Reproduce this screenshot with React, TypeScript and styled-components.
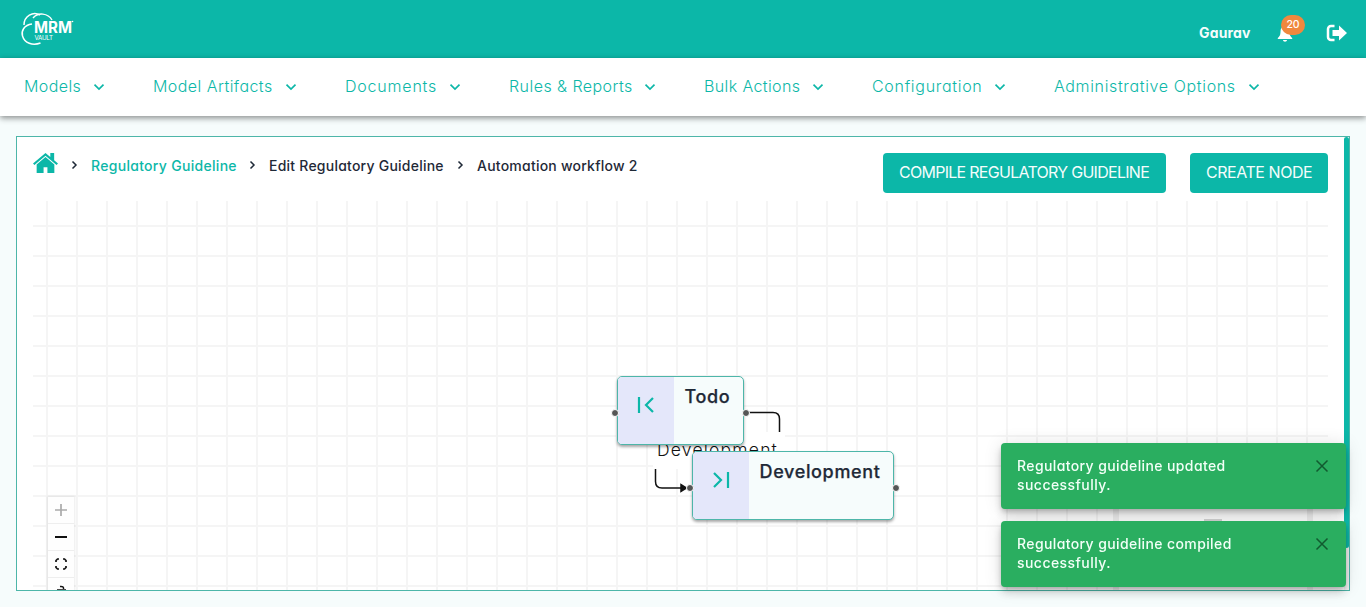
import React from 'react';
import styled, { createGlobalStyle } from 'styled-components';

const TEAL = '#0cb7a8';

const Global = createGlobalStyle`
  * { box-sizing: border-box; }
  html, body { margin: 0; height: 100%; overflow: hidden; }
  body { background: #f6fcfc; font-family: Inter, "Open Sans", sans-serif; font-feature-settings: "cv11", "ss03"; color: #1f2937; }
`;
const Page = styled.div`height: 607px; display: flex; flex-direction: column;`;
const TopBar = styled.header`
  height: 58px; flex: none; background: ${TEAL}; display: flex; align-items: center;
  padding: 0 18px 0 20px; color: #f4fdfc;
`;
const Account = styled.div`margin-left: auto; display: flex; align-items: center; padding-top: 8px;`;
const Text = styled.span<{ $w: number; $ls?: number }>`
  display: inline-block; width: ${p => p.$w}px; letter-spacing: ${p => p.$ls ?? 0}px; white-space: nowrap;
`;
const UserName = styled(Text)`font-size: 14px; font-weight: 700; padding-bottom: 2px;`;
const Bell = styled.div`position: relative; width: 16px; height: 17px; margin: 1px 33px 0 26px; display: flex;`;
const Badge = styled.span`
  position: absolute; left: 4px; top: -10px; width: 24px; height: 20px; border-radius: 10px;
  background: #f0883e; color: #fff; font-size: 10.5px; font-weight: 500; line-height: 19px; text-align: center;
`;
const Nav = styled.nav`
  height: 58px; flex: none; background: #fff; display: flex; align-items: center; gap: 48px; padding-left: 24px;
  box-shadow: 0 2px 6px rgba(0,0,0,.45); color: ${TEAL}; z-index: 1;
`;
const NavItem = styled.a`
  display: flex; align-items: center; gap: 12px; font-size: 16px; font-weight: 300;
  span { padding-bottom: 2px; }
`;
const Panel = styled.main`
  margin: 20px 16px 0; height: 455px; border: 1px solid #4db6a9; background: #fff; display: flex; overflow: hidden;
`;
const Content = styled.section`flex: 1; padding: 16px 16px 0; display: flex; flex-direction: column; min-width: 0;`;
const ScrollTrack = styled.div`width: 5px; background: #f1f1f1;`;
const ScrollThumb = styled.div`height: 411px; background: ${TEAL}; border-radius: 3px;`;
const Header = styled.div`height: 48px; flex: none; display: flex; align-items: flex-start;`;
const Crumbs = styled.div`display: flex; align-items: center; height: 24px;`;
const HomeIcon = styled.svg`align-self: flex-start;`;
const Crumb = styled(Text)<{ $link?: boolean }>`
  font-size: 14px; font-weight: 500; color: ${p => (p.$link ? TEAL : '#1f2937')};
`;
const Sep = styled.svg`margin: 0 12px;`;
const Actions = styled.div`margin-left: auto; display: flex; gap: 24px;`;
const Button = styled.button<{ $w: number }>`
  width: ${p => p.$w}px; height: 40px; border: 0; border-radius: 4px; background: ${TEAL}; color: #f4fdfc;
  font: 400 16px Inter, sans-serif; padding: 0 0 2px 16px; text-align: left;
`;
const Canvas = styled.div`
  position: relative; flex: 1; overflow: hidden;
  background-image: linear-gradient(90deg, #f5f5f5 2px, transparent 2px), linear-gradient(#f5f5f5 2px, transparent 2px);
  background-size: 30px 30px; background-position: 13px 0, 0 24px;
`;
const Edges = styled.svg`position: absolute; left: 0; top: 0;`;
const EdgeLabel = styled.div`
  position: absolute; left: 620px; top: 231px; width: 132px; height: 37px; background: #fff;
  color: #111; font-size: 17.5px; font-weight: 300; line-height: 36px; padding-left: 4px;
`;
const Node = styled.div<{ $x: number; $y: number; $w: number }>`
  position: absolute; left: ${p => p.$x}px; top: ${p => p.$y}px; width: ${p => p.$w}px; height: 69px;
  border: 1.5px solid #4db6a9; border-radius: 5px; background: #f6fcfc; display: flex;
  box-shadow: 0 2px 3px rgba(0,0,0,.35);
`;
const NodeIcon = styled.div`
  flex: none; width: 56px; background: #e4e7fa; border-radius: 4px 0 0 4px; display: flex; justify-content: center; padding-top: 19px; color: ${TEAL};
`;
const NodeTitle = styled.div`padding: 8px 0 0 11px; font-size: 18px; font-weight: 500; line-height: 24px; -webkit-text-stroke: .25px;`;
const Handle = styled.i<{ $right?: boolean }>`
  position: absolute; top: 32px; ${p => (p.$right ? 'right: -7px' : 'left: -7px')}; width: 8px; height: 8px;
  border-radius: 50%; background: #555; border: 1px solid #fff;
`;
const Controls = styled.div`
  position: absolute; left: 15px; top: 296px; width: 26px; box-shadow: 0 0 2px 1px rgba(0,0,0,.08); background: #fefefe;
`;
const ControlButton = styled.div`
  height: 27px; border-bottom: 1px solid #eee; display: flex; align-items: center; justify-content: center;
`;
const MiniMap = styled.div`
  position: absolute; right: 15px; top: 294px; width: 200px; height: 150px; background: #fff;
  border: solid #efefef; border-width: 0 6px;
`;
const MiniNode = styled.div`position: absolute; left: 85px; top: 24px; width: 18px; height: 7px; background: #d5d5d5;`;
const Toasts = styled.div`position: fixed; left: 1001px; top: 443px; display: flex; flex-direction: column; gap: 12px; z-index: 2;`;
const Toast = styled.div`
  width: 345px; height: 66px; border-radius: 4px; background: #2aae60; color: #f2fff7; display: flex; justify-content: space-between;
  padding: 13px 17px 0 16px; font-size: 14px; font-weight: 500; line-height: 19px;
  box-shadow: 0 3px 5px -1px rgba(0,0,0,.2), 0 6px 10px rgba(0,0,0,.14), 0 1px 18px rgba(0,0,0,.12);
`;
const CloseIcon = styled.svg`margin-top: 3px;`;
const Lines = styled.div`display: flex; flex-direction: column;`;

const NAV: [string, number, number][] = [
  ['Models', 57, 0.4], ['Model Artifacts', 120, 0.45], ['Documents', 92, 0.8], ['Rules & Reports', 123, 0.45],
  ['Bulk Actions', 96, 0.38], ['Configuration', 110, 0.7], ['Administrative Options', 182, 0.64],
];
const TOASTS: [string, number, number][] = [['Regulatory guideline updated', 209, 0.39], ['Regulatory guideline compiled', 215, 0.39]];

const Chevron = () => (
  <svg width="12" height="8" viewBox="0 0 12 8" fill="none" stroke="currentColor" strokeWidth="1.7"><path d="M1.5 1.7 6 6l4.5-4.3" /></svg>
);
const Separator = () => (
  <Sep width="9" height="10" viewBox="0 0 9 10" fill="none" stroke="#1f2937" strokeWidth="1.5"><path d="m2.500 1.5 3.5 3.5-3.500 3.500" /></Sep>
);
const Logo = () => (
  <svg width="56" height="36" viewBox="0 0 56 36" fill="none" stroke="#fff" strokeWidth="1.5">
    <path d="M4 14C4 5 13 0 20 4" /><path d="M13 7c5-6 15-5 19 2" /><path d="M12 13C4 14 1 20 2.500 25c2 7 10 10 18 7" />
    <g fill="#fff" stroke="none" fontFamily="Inter, sans-serif">
      <text x="14" y="22.300" fontSize="15.500" fontWeight="700" textLength="38" lengthAdjust="spacingAndGlyphs">MRM</text>
      <text x="14.500" y="29" fontSize="6.2" textLength="18.500">VAULT</text>
      <circle cx="52.500" cy="10.500" r=".8" />
    </g>
  </svg>
);
const Close = () => (
  <CloseIcon width="14" height="14" viewBox="0 0 14 14" stroke="#125a30" strokeWidth="1.5"><path d="m1.500 1.500 11 11M12.500 1.500l-11 11" /></CloseIcon>
);

export default function App() {
  return (
    <Page>
      <Global />
      <TopBar>
        <Logo />
        <Account>
          <UserName $w={52} $ls={0.15}>Gaurav</UserName>
          <Bell>
            <svg width="16" height="18" viewBox="0 0 16 18" fill="#fff"><path d="M8 1C4.800 1.300 3.500 3.500 3.500 6.500c0 4-1.200 5-2.700 6.500V14h14.400v-1c-1.500-1.500-2.700-2.500-2.700-6.500C12.500 3.500 11.200 1.300 8 1ZM6 15h4c0 2.300-4 2.300-4 0Z" /></svg>
            <Badge>20</Badge>
          </Bell>
          <svg width="22" height="18" viewBox="0 0 22 18"><path d="M8.500 2H5a3 3 0 0 0-3 3v8a3 3 0 0 0 3 3h3.500" fill="none" stroke="#fff" strokeWidth="2.500" /><path d="M6.500 6H13V1.500L21 9l-8 7.500V12H6.500Z" fill="#fff" /></svg>
        </Account>
      </TopBar>
      <Nav>
        {NAV.map(([t, w, ls]) => <NavItem key={t}><Text $w={w} $ls={ls}>{t}</Text><Chevron /></NavItem>)}
      </Nav>
      <Panel>
        <Content>
          <Header>
            <Crumbs>
              <HomeIcon width="25" height="20" viewBox="0 0 26 21" preserveAspectRatio="none" fill={TEAL}><path d="M13 0 0 11l1.500 1.500L13 3l11.500 9.500L26 11l-4-3.500V0h-4v4.200Z" /><path d="M13 4.300 3.800 12v9H11v-6h4v6h7.200v-9Z" /></HomeIcon>
              <Separator />
              <Crumb $w={145} $ls={0.3} $link>Regulatory Guideline</Crumb>
              <Separator />
              <Crumb $w={175} $ls={0.23}>Edit Regulatory Guideline</Crumb>
              <Separator />
              <Crumb $w={160} $ls={0.23}>Automation workflow 2</Crumb>
            </Crumbs>
            <Actions>
              <Button $w={283}><Text $w={252} $ls={-0.72}>COMPILE REGULATORY GUIDELINE</Text></Button>
              <Button $w={138}><Text $w={106} $ls={-0.45}>CREATE NODE</Text></Button>
            </Actions>
          </Header>
          <Canvas>
            <Edges width="1295" height="389" fill="none" stroke="#111" strokeWidth="1.500">
              <path d="M716 211.500h24q6.500 0 6.500 6.500v18M622.500 262v18.500q0 6.500 6.500 6.500h20" /><path d="M648 283.500v7l5.500-3.500Z" fill="#111" />
            </Edges>
            <EdgeLabel><Text $w={121} $ls={1.2}>Development</Text></EdgeLabel>
            <Node $x={583.5} $y={175} $w={127}>
              <NodeIcon><svg width="18" height="18" viewBox="0 0 18 18" fill="none" stroke="currentColor" strokeWidth="2.200"><path d="M2 1v16M16 2 9 9l7 7" /></svg></NodeIcon>
              <NodeTitle><Text $w={45} $ls={0.6}>Todo</Text></NodeTitle><Handle /><Handle $right />
            </Node>
            <Node $x={658.5} $y={250} $w={202}>
              <NodeIcon><svg width="18" height="18" viewBox="0 0 18 18" fill="none" stroke="currentColor" strokeWidth="2.200"><path d="M16 1v16M2 2l7 7-7 7" /></svg></NodeIcon>
              <NodeTitle><Text $w={121} $ls={0.65}>Development</Text></NodeTitle><Handle /><Handle $right />
            </Node>
            <Controls>
              <ControlButton><svg width="12" height="12" stroke="#aaa" strokeWidth="1.700"><path d="M0 6h12M6 0v12" /></svg></ControlButton>
              <ControlButton><svg width="12" height="12" stroke="#111" strokeWidth="2"><path d="M0 6h12" /></svg></ControlButton>
              <ControlButton><svg width="12" height="12" fill="none" stroke="#111" strokeWidth="1.700"><path d="M1 4V2.500L2.500 1H4M8 1h1.500L11 2.500V4M11 8v1.500L9.500 11H8M4 11H2.500L1 9.500V8" /></svg></ControlButton>
              <ControlButton><svg width="12" height="12" fill="none" stroke="#111" strokeWidth="1.500"><path d="M5 1.500q4-.5 3.500 2.500M2 5h9" /></svg></ControlButton>
            </Controls>
            <MiniMap><MiniNode /></MiniMap>
          </Canvas>
        </Content>
        <ScrollTrack><ScrollThumb /></ScrollTrack>
      </Panel>
      <Toasts>
        {TOASTS.map(([t, w, ls]) => <Toast key={t}><Lines><Text $w={w} $ls={ls}>{t}</Text><Text $w={89} $ls={0.45}>successfully.</Text></Lines><Close /></Toast>)}
      </Toasts>
    </Page>
  );
}
